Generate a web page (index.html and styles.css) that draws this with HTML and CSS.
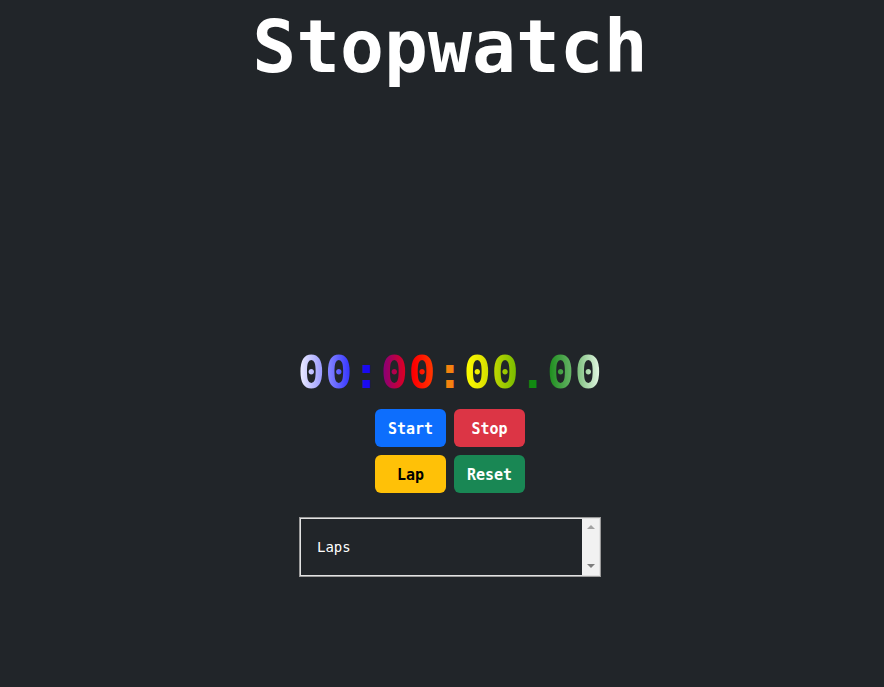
FILE: index.html
```html
<!DOCTYPE html>
<html lang="en">
<head>
<meta charset="utf-8">
<title>Stopwatch</title>
<link rel="stylesheet" href="styles.css">
</head>
<body>
<main class="page">
  <h1 class="title">Stopwatch</h1>
  <div class="timer">
    <span class="seg hours">00</span><span class="sep sep-blue">:</span><span class="seg minutes">00</span><span class="sep sep-orange">:</span><span class="seg seconds">00</span><span class="sep sep-green">.</span><span class="seg centis">00</span>
  </div>
  <div class="controls">
    <button class="btn btn-start">Start</button>
    <button class="btn btn-stop">Stop</button>
    <button class="btn btn-lap">Lap</button>
    <button class="btn btn-reset">Reset</button>
  </div>
  <div class="laps">
    <div class="laps-body">Laps</div>
    <div class="scrollbar" aria-hidden="true">
      <span class="arrow-up"></span>
      <span class="arrow-down"></span>
    </div>
  </div>
</main>
</body>
</html>
```
FILE: styles.css
```css
html, body {
  margin: 0;
  background: #212529;
}
body {
  font-family: "DejaVu Sans Mono", monospace;
  color: #fff;
}
.page {
  display: flex;
  flex-direction: column;
  align-items: center;
  padding-left: 16px;
}
.title {
  margin: 0;
  padding-top: 3px;
  font-size: 73px;
  line-height: 1.2;
  font-weight: bold;
  color: #fff;
}
.timer {
  margin-top: 255px;
  font-size: 45px;
  line-height: 54px;
  font-weight: bold;
  letter-spacing: 0.6px;
  white-space: nowrap;
}
.seg {
  -webkit-background-clip: text;
  background-clip: text;
  color: transparent;
}
.hours {
  background-image: linear-gradient(to right, #f4f4ff, #2a2aff);
}
.minutes {
  background-image: linear-gradient(to right, #800080, #ff0000 60%, #ff4000);
}
.seconds {
  background-image: linear-gradient(to right, #ffff00, #e8e800 30%, #70b800);
}
.centis {
  background-image: linear-gradient(to right, #168a16, #70b870 50%, #f0fff0);
}
.sep-blue { color: #1a0af0; }
.sep-orange { color: #f5820f; }
.sep-green { color: #118a11; }
.controls {
  margin-top: 9px;
  display: grid;
  grid-template-columns: 71px 71px;
  grid-auto-rows: 38px;
  gap: 8px;
}
.btn {
  font-family: "DejaVu Sans Mono", monospace;
  font-weight: bold;
  font-size: 15px;
  border: 1px solid transparent;
  border-radius: 6px;
  padding: 2px 0 0;
  color: #fff;
  cursor: pointer;
}
.btn-start { background: #0d6efd; }
.btn-stop { background: #dc3545; }
.btn-lap { background: #ffc107; color: #000; }
.btn-reset { background: #198754; }
.laps {
  margin-top: 24px;
  box-sizing: border-box;
  width: 302px;
  height: 60px;
  display: flex;
  border: 1px solid #9a9a9a;
  box-shadow: inset 0 0 0 1px #e2e2e2;
  padding: 1px;
}
.laps-body {
  flex: 1;
  padding: 16px;
  font-size: 14px;
  line-height: 24px;
  color: #fff;
}
.scrollbar {
  width: 17px;
  background: #f1f1f1;
  display: flex;
  flex-direction: column;
  align-items: center;
  justify-content: space-between;
  padding: 6px 0 7px;
  box-sizing: border-box;
}
.arrow-up {
  width: 0;
  height: 0;
  border-left: 4px solid transparent;
  border-right: 4px solid transparent;
  border-bottom: 4px solid #a3a3a3;
}
.arrow-down {
  width: 0;
  height: 0;
  border-left: 4px solid transparent;
  border-right: 4px solid transparent;
  border-top: 4px solid #7d7d7d;
}
```
